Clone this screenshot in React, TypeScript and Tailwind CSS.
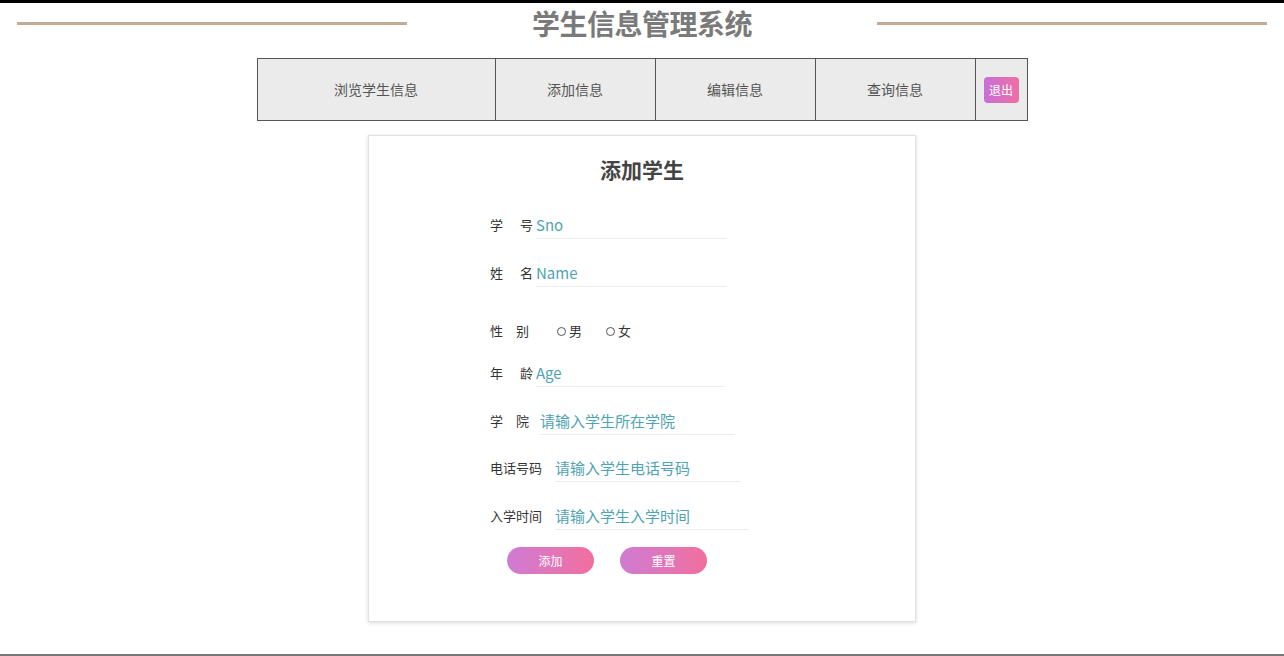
const NAV = [
  { label: "浏览学生信息", w: "w-[238px]" },
  { label: "添加信息", w: "w-[160px]" },
  { label: "编辑信息", w: "w-[160px]" },
  { label: "查询信息", w: "w-[160px]" },
];

const FIELDS = [
  { label: ["学", "号"], ph: "Sno", lw: "w-[43px] mr-[3px]", iw: "w-[191px]", mt: "mt-[27px]" },
  { label: ["姓", "名"], ph: "Name", lw: "w-[43px] mr-[3px]", iw: "w-[191px]", mt: "mt-[20px]" },
];

const FIELDS2 = [
  { label: ["年", "龄"], ph: "Age", lw: "w-[43px] mr-[3px]", iw: "w-[189px]", mt: "mt-[14px]" },
  { label: ["学", "院"], ph: "请输入学生所在学院", lw: "w-[39px] mr-[11px]", iw: "w-[195px]", mt: "mt-[20px]" },
  { label: ["电话号码"], ph: "请输入学生电话号码", lw: "w-[52px] mr-[13px]", iw: "w-[185px]", mt: "mt-[19px]" },
  { label: ["入学时间"], ph: "请输入学生入学时间", lw: "w-[52px] mr-[13px]", iw: "w-[193px]", mt: "mt-[20px]" },
];

function Field({ f }: { f: (typeof FIELDS)[number] }) {
  return (
    <div className={`flex items-center h-[28px] ${f.mt}`}>
      <span className={`${f.lw} shrink-0 flex justify-between text-[13px] text-[#333]`}>
        {f.label.map((c) => (
          <span key={c}>{c}</span>
        ))}
      </span>
      <input
        placeholder={f.ph}
        className={`${f.iw} h-[28px] border-b border-[#ececec] bg-transparent text-[15px] text-[#333] outline-none placeholder:text-[#4ea3b4]`}
      />
    </div>
  );
}

function Radio({ label }: { label: string }) {
  return (
    <label className="flex items-center gap-[3px] text-[13px] text-[#333]">
      <span className="w-[9px] h-[9px] rounded-full border border-[#555]" />
      {label}
    </label>
  );
}

export default function App() {
  return (
    <div
      className="h-[656px] flex flex-col bg-white overflow-hidden"
      style={{ fontFamily: '"Noto Sans CJK SC", "Noto Sans", sans-serif' }}
    >
      <div className="h-[3px] bg-black" />

      {/* header */}
      <div className="h-[40px] flex items-center px-[17px]">
        <div className="flex-1 h-[3px] bg-[#c2ab96]" />
        <h1 className="mx-[125px] text-[28px] leading-[36px] font-bold text-[#7a7a7a] tracking-[-0.5px]">
          学生信息管理系统
        </h1>
        <div className="flex-1 h-[3px] bg-[#c2ab96]" />
      </div>

      {/* nav */}
      <div className="mt-[15px] mx-auto w-[771px] h-[63px] flex border border-[#555] bg-[#ebebeb]">
        {NAV.map((n) => (
          <div
            key={n.label}
            className={`${n.w} flex items-center justify-center border-r border-[#555] text-[14px] text-[#555]`}
          >
            {n.label}
          </div>
        ))}
        <div className="flex-1 flex items-center justify-center">
          <button className="w-[35px] h-[26px] rounded-[4px] bg-gradient-to-r from-[#c86ed6] to-[#f06ea2] text-[12px] text-white">
            退出
          </button>
        </div>
      </div>

      {/* card */}
      <div className="mt-[14px] mx-auto w-[548px] border border-[#e2e2e2] shadow-[0_1px_4px_rgba(0,0,0,0.15)] bg-white pt-[18px] pb-[47px]">
        <h2 className="text-center text-[21px] leading-[30px] font-bold text-[#444]">添加学生</h2>
        <div className="pl-[121px]">
          {FIELDS.map((f) => (
            <Field key={f.ph} f={f} />
          ))}
          <div className="flex items-center h-[28px] mt-[30px]">
            <span className="w-[39px] mr-[28px] shrink-0 flex justify-between text-[13px] text-[#333]">
              <span>性</span>
              <span>别</span>
            </span>
            <div className="flex items-center gap-[24px]">
              <Radio label="男" />
              <Radio label="女" />
            </div>
          </div>
          {FIELDS2.map((f) => (
            <Field key={f.ph} f={f} />
          ))}
        </div>
        <div className="mt-[17px] flex pl-[138px] gap-[26px]">
          <button className="w-[87px] h-[27px] rounded-full bg-gradient-to-r from-[#cf7bd3] to-[#f26e9e] text-[12px] text-white">
            添加
          </button>
          <button className="w-[87px] h-[27px] rounded-full bg-gradient-to-r from-[#cf7bd3] to-[#f26e9e] text-[12px] text-white">
            重置
          </button>
        </div>
      </div>

      <div className="mt-auto h-[2px] bg-[#777]" />
    </div>
  );
}
